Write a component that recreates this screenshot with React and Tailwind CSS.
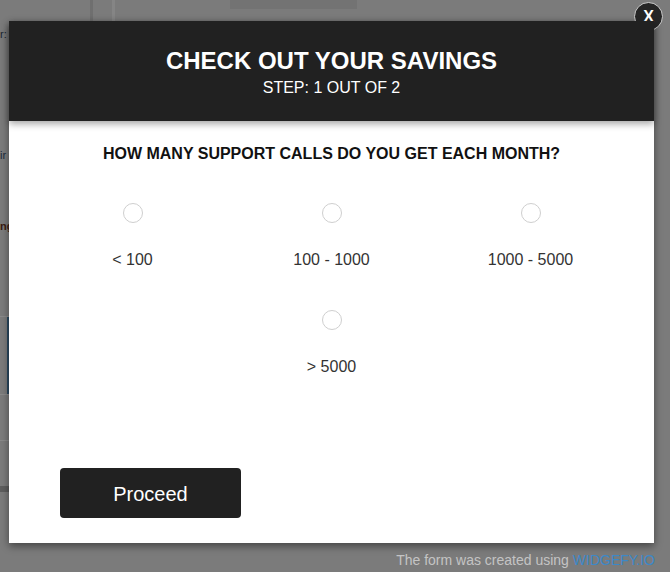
import React from "react";

function Radio({ label }) {
  return (
    <div className="flex flex-col items-center">
      <span className="block w-[20px] h-[20px] rounded-full border border-[#cfcfcf] bg-white"></span>
      <span className="mt-[28px] text-[16px] leading-[18px] text-[#333333]">{label}</span>
    </div>
  );
}

export default function App() {
  return (
    <div
      className="relative w-[670px] h-[572px] overflow-hidden bg-[#7b7b7b]"
      style={{ fontFamily: '"Liberation Sans", Arial, sans-serif' }}
    >
      {/* dimmed page behind the overlay */}
      <div className="absolute inset-x-0 top-0 h-[21px] flex">
        <div className="w-[93px] border-r-[3px] border-[#6f6f6f]"></div>
        <div className="w-[22px] border-r-[3px] border-[#858585]"></div>
        <div className="ml-[115px] w-[127px] h-[9px] bg-[#737373]"></div>
      </div>
      <div className="absolute left-0 top-[28px] w-[9px] h-[470px] flex flex-col text-[11px] leading-[12px]">
        <span className="text-[#1a2530]">r:</span>
        <span className="mt-[109px] text-[#1a2a3a]">ir</span>
        <span className="mt-[59px] font-bold text-[#3a1a10]">ng</span>
        <div className="mt-[84px] h-[79px] border-t border-b border-[#8a8a8a]">
          <div className="ml-[7px] w-[2px] h-full bg-[#2b4a60]"></div>
        </div>
        <div className="mt-[45px] h-[1px] bg-[#8a8a8a]"></div>
        <div className="mt-[45px] h-[6px] bg-[#5e5e5e]"></div>
      </div>

      <div className="relative pt-[21px] pl-[9px]">
        <div className="w-[645px] bg-white shadow-[0_3px_8px_rgba(0,0,0,0.45)]">
          <div className="relative z-10 h-[100px] bg-[#212121] flex flex-col items-center shadow-[0_3px_7px_rgba(0,0,0,0.35)]">
            <div className="mt-[26px] text-[24px] leading-[28px] font-bold text-white">
              CHECK OUT YOUR SAVINGS
            </div>
            <div className="mt-[4px] text-[16px] leading-[18px] text-white">STEP: 1 OUT OF 2</div>
          </div>
          <div className="px-[24px] pt-[24px] pb-[25px]">
            <div className="text-center text-[16px] leading-[18px] font-bold text-[#111111]">
              HOW MANY SUPPORT CALLS DO YOU GET EACH MONTH?
            </div>
            <div className="mt-[40px] grid grid-cols-3 gap-y-[41px]">
              <Radio label="< 100" />
              <Radio label="100 - 1000" />
              <Radio label="1000 - 5000" />
              <div></div>
              <Radio label="> 5000" />
            </div>
            <div className="mt-[92px] pl-[27px]">
              <button className="w-[181px] h-[50px] rounded-[4px] bg-[#212121] text-white text-[20px] pt-[2px]">
                Proceed
              </button>
            </div>
          </div>
        </div>
        <div className="w-[646px] mt-[8px] text-right text-[14px] leading-[18px] text-[#c4c4c4]">
          The form was created using <span className="text-[#3c88c8]">WIDGEFY.IO</span>
        </div>
      </div>

      <div className="absolute left-[634px] top-[2px] w-[29px] h-[29px] rounded-full bg-[#252525] border border-[#cfcfcf] flex items-center justify-center text-white text-[16px] font-bold leading-none">
        X
      </div>
    </div>
  );
}
